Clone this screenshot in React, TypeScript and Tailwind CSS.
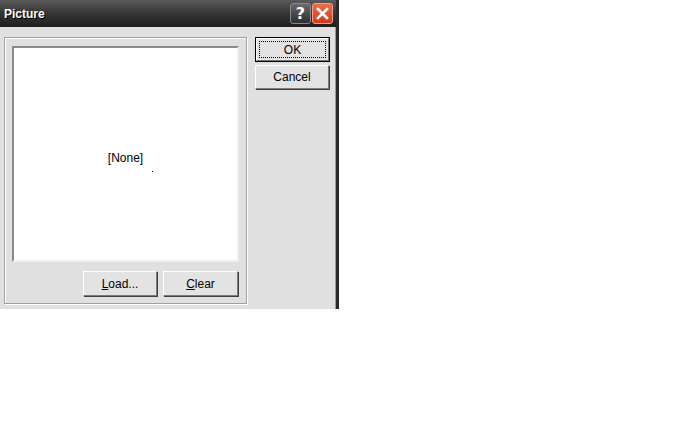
const btn =
  "flex items-center justify-center bg-[#e3e3e3] border border-t-white border-l-white border-r-[#7a7a7a] border-b-[#7a7a7a] shadow-[1px_1px_0_#404040] text-[12px] text-black";

function HelpIcon() {
  return (
    <div className="w-[21px] h-[21px] rounded-[3px] border border-[#8a8a8a] bg-gradient-to-b from-[#6a6a6a] to-[#2e2e2e] flex items-center justify-center">
      <span className="text-white font-bold text-[16px] leading-none font-['DejaVu_Sans',sans-serif]">?</span>
    </div>
  );
}

function CloseIcon() {
  return (
    <div className="w-[21px] h-[21px] rounded-[3px] border border-[#f0a090] bg-gradient-to-b from-[#f06a45] to-[#d03a1a] flex items-center justify-center">
      <svg width="13" height="13" viewBox="0 0 13 13">
        <path d="M2 2 L11 11 M11 2 L2 11" stroke="white" strokeWidth="2.6" strokeLinecap="square" />
      </svg>
    </div>
  );
}

export default function App() {
  return (
    <div className="w-[698px] h-[424px] bg-white font-['Liberation_Sans',Arial,sans-serif]">
      <div className="w-[339px] h-[309px] flex flex-col bg-[#e0e0e0] border-r-[3px] border-r-[#2a2a2a]">
        <div className="h-[27px] flex items-center justify-between pl-[4px] pr-[3px] bg-gradient-to-b from-[#5a5a5a] via-[#353535] to-[#1f1f1f]">
          <span className="text-white font-bold text-[12px] [text-shadow:1px_1px_0_#000]">Picture</span>
          <div className="flex gap-[1px]">
            <HelpIcon />
            <CloseIcon />
          </div>
        </div>
        <div className="flex flex-1 pt-[10px] pl-[4px] pr-[5px] pb-[5px] gap-[8px] border-r border-r-[#9a9a9a]">
          <div className="w-[245px] h-[267px] border border-[#a0a0a0] shadow-[inset_1px_1px_0_#fff,1px_1px_0_#fff] flex flex-col px-[7px] pt-[8px]">
            <div className="relative h-[216px] bg-white border-2 border-t-[#8a8a8a] border-l-[#8a8a8a] border-r-[#f0f0f0] border-b-[#f0f0f0] flex items-center justify-center pt-[7px]">
              <span className="text-[12px] text-black">[None]</span>
              <span className="absolute left-[138px] top-[123px] w-[1px] h-[1px] bg-black" />
            </div>
            <div className="flex justify-end gap-[6px] mt-[9px] pr-[1px]">
              <div className={`${btn} w-[74px] h-[25px]`}>
                <span><span className="underline">L</span>oad...</span>
              </div>
              <div className={`${btn} w-[75px] h-[25px]`}>
                <span><span className="underline">C</span>lear</span>
              </div>
            </div>
          </div>
          <div className="flex flex-col gap-[3px]">
            <div className="w-[75px] h-[25px] border border-black flex">
              <div className="flex-1 flex items-center justify-center bg-[#e3e3e3] border border-t-white border-l-white border-r-[#7a7a7a] border-b-[#7a7a7a] p-[2px]">
                <div className="w-full h-full border border-dotted border-black flex items-center justify-center text-[12px]">
                  OK
                </div>
              </div>
            </div>
            <div className={`${btn} w-[74px] h-[24px]`}>Cancel</div>
          </div>
        </div>
      </div>
    </div>
  );
}
